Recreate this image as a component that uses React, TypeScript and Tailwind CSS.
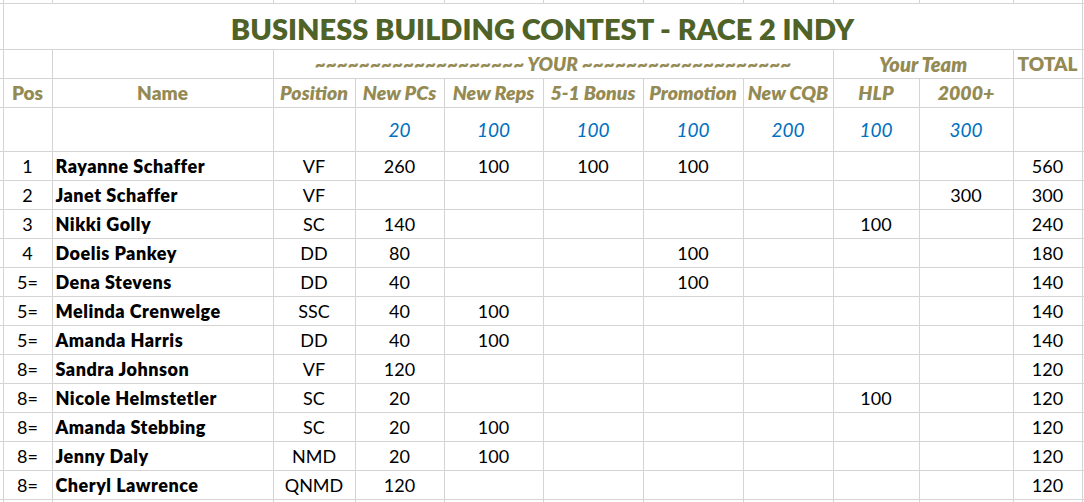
import React from "react";

const rows: (string | null)[][] = [
  ["1", "Rayanne Schaffer", "VF", "260", "100", "100", "100", null, null, null, "560"],
  ["2", "Janet Schaffer", "VF", null, null, null, null, null, null, "300", "300"],
  ["3", "Nikki Golly", "SC", "140", null, null, null, null, "100", null, "240"],
  ["4", "Doelis Pankey", "DD", "80", null, null, "100", null, null, null, "180"],
  ["5=", "Dena Stevens", "DD", "40", null, null, "100", null, null, null, "140"],
  ["5=", "Melinda Crenwelge", "SSC", "40", "100", null, null, null, null, null, "140"],
  ["5=", "Amanda Harris", "DD", "40", "100", null, null, null, null, null, "140"],
  ["8=", "Sandra Johnson", "VF", "120", null, null, null, null, null, null, "120"],
  ["8=", "Nicole Helmstetler", "SC", "20", null, null, null, null, "100", null, "120"],
  ["8=", "Amanda Stebbing", "SC", "20", "100", null, null, null, null, null, "120"],
  ["8=", "Jenny Daly", "NMD", "20", "100", null, null, null, null, null, "120"],
  ["8=", "Cheryl Lawrence", "QNMD", "120", null, null, null, null, null, null, "120"],
];

const widths = [3, 49, 221, 82, 89, 99, 100, 100, 90, 86, 94, 69, 2];

const td = "border border-[#d4d4d4] p-0";
const tan = "text-[#948a54] font-extrabold";
const tilde = "~~~~~~~~~~~~~~~~~~~";

export default function App() {
  return (
    <div
      className="w-[1084px] h-[502px] overflow-hidden bg-white"
      style={{ fontFamily: "Lato, 'Open Sans', sans-serif" }}
    >
      <table className="table-fixed border-collapse w-[1084px] text-[18px] leading-none">
        <colgroup>
          {widths.map((w, i) => (
            <col key={i} style={{ width: w }} />
          ))}
        </colgroup>
        <tbody>
          <tr className="h-[3px]">
            <td className={`${td} border-t-0 border-l-0`} />
            {widths.slice(1).map((_, i) => (
              <td key={i} className={`${td} border-t-0 ${i === widths.length - 2 ? "border-r-0" : ""}`} />
            ))}
          </tr>
          <tr className="h-[46px]">
            <td className={`${td} border-l-0`} />
            <td
              colSpan={11}
              className={`${td} text-center align-middle pt-[4px] text-[29px] font-extrabold text-[#4f6228]`}
            >
              BUSINESS BUILDING CONTEST - RACE 2 INDY
            </td>
            <td className={`${td} border-r-0`} />
          </tr>
          <tr className="h-[29px]">
            <td className={`${td} border-l-0`} />
            <td className={td} />
            <td className={td} />
            <td colSpan={6} className={`${td} ${tan} italic text-[19px] text-center whitespace-nowrap overflow-hidden`}>
              {tilde} YOUR {tilde}
            </td>
            <td colSpan={2} className={`${td} ${tan} italic text-[20px] text-center`}>
              Your Team
            </td>
            <td className={`${td} ${tan} text-[19px] text-center`}>TOTAL</td>
            <td className={`${td} border-r-0`} />
          </tr>
          <tr className="h-[29px]">
            <td className={`${td} border-l-0`} />
            <td className={`${td} ${tan} text-[19px] text-center`}>Pos</td>
            <td className={`${td} ${tan} text-[19px] text-center`}>Name</td>
            {["Position", "New PCs", "New Reps", "5-1 Bonus", "Promotion", "New CQB", "HLP", "2000+"].map(
              (h) => (
                <td key={h} className={`${td} ${tan} italic text-[19.5px] text-center whitespace-nowrap`}>
                  {h}
                </td>
              )
            )}
            <td className={td} />
            <td className={`${td} border-r-0`} />
          </tr>
          <tr className="h-[44px]">
            <td className={`${td} border-l-0`} />
            <td className={td} />
            <td className={td} />
            <td className={td} />
            {["20", "100", "100", "100", "200", "100", "300"].map((v, i) => (
              <td key={i} className={`${td} text-center italic text-[19px] text-[#0070c0]`}>
                {v}
              </td>
            ))}
            <td className={td} />
            <td className={`${td} border-r-0`} />
          </tr>
          {rows.map((r, ri) => (
            <tr key={ri} className="h-[29px]">
              <td className={`${td} border-l-0`} />
              <td className={`${td} text-center text-black`}>{r[0]}</td>
              <td className={`${td} pl-[3px] font-extrabold tracking-[0.5px] text-black whitespace-nowrap`}>{r[1]}</td>
              {r.slice(2).map((v, i) => (
                <td key={i} className={`${td} text-center text-black`}>
                  {v ?? ""}
                </td>
              ))}
              <td className={`${td} border-r-0`} />
            </tr>
          ))}
          <tr className="h-[3px]">
            <td className={`${td} border-l-0 border-b-0`} />
            {widths.slice(1).map((_, i) => (
              <td key={i} className={`${td} border-b-0 ${i === widths.length - 2 ? "border-r-0" : ""}`} />
            ))}
          </tr>
        </tbody>
      </table>
    </div>
  );
}
